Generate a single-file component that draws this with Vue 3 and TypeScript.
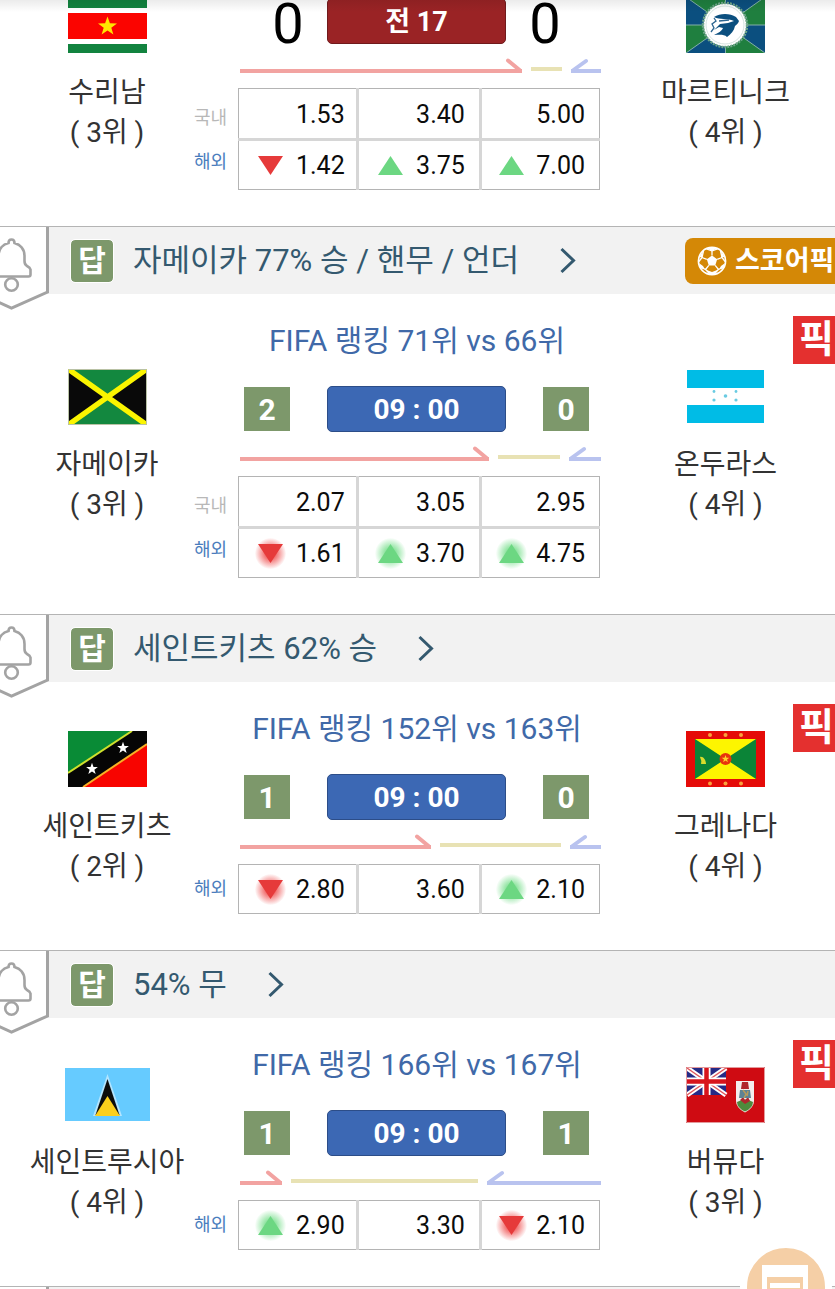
<script setup lang="ts">
type Trend = 'up' | 'down' | ''
interface Odd { value: string; trend: Trend }
interface OddsRow { label: string; foreign: boolean; odds: Odd[] }
interface Team { flag: string; name: string; rank: string; score: string }
interface Match {
  id: number
  pick: string
  scorePick: boolean
  fifa: string
  live: boolean
  time: string
  home: Team
  away: Team
  flow: [number, number, number]
  glow: boolean
  rows: OddsRow[]
}

const odd = (value: string, trend: Trend = ''): Odd => ({ value, trend })

const matches: Match[] = [
  {
    id: 1, pick: '', scorePick: false, fifa: '', live: true, time: '전 17',
    home: { flag: 'suriname', name: '수리남', rank: '( 3위 )', score: '0' },
    away: { flag: 'martinique', name: '마르티니크', rank: '( 4위 )', score: '0' },
    flow: [283, 31, 30], glow: false,
    rows: [
      { label: '국내', foreign: false, odds: [odd('1.53'), odd('3.40'), odd('5.00')] },
      { label: '해외', foreign: true, odds: [odd('1.42', 'down'), odd('3.75', 'up'), odd('7.00', 'up')] },
    ],
  },
  {
    id: 2, pick: '자메이카 77% 승 / 핸무 / 언더', scorePick: true, fifa: 'FIFA 랭킹 71위 vs 66위', live: false, time: '09 : 00',
    home: { flag: 'jamaica', name: '자메이카', rank: '( 3위 )', score: '2' },
    away: { flag: 'honduras', name: '온두라스', rank: '( 4위 )', score: '0' },
    flow: [249, 62, 32], glow: true,
    rows: [
      { label: '국내', foreign: false, odds: [odd('2.07'), odd('3.05'), odd('2.95')] },
      { label: '해외', foreign: true, odds: [odd('1.61', 'down'), odd('3.70', 'up'), odd('4.75', 'up')] },
    ],
  },
  {
    id: 3, pick: '세인트키츠 62% 승', scorePick: false, fifa: 'FIFA 랭킹 152위 vs 163위', live: false, time: '09 : 00',
    home: { flag: 'kitts', name: '세인트키츠', rank: '( 2위 )', score: '1' },
    away: { flag: 'grenada', name: '그레나다', rank: '( 4위 )', score: '0' },
    flow: [191, 121, 31], glow: true,
    rows: [{ label: '해외', foreign: true, odds: [odd('2.80', 'down'), odd('3.60'), odd('2.10', 'up')] }],
  },
  {
    id: 4, pick: '54% 무', scorePick: false, fifa: 'FIFA 랭킹 166위 vs 167위', live: false, time: '09 : 00',
    home: { flag: 'lucia', name: '세인트루시아', rank: '( 4위 )', score: '1' },
    away: { flag: 'bermuda', name: '버뮤다', rank: '( 3위 )', score: '1' },
    flow: [42, 187, 114], glow: true,
    rows: [{ label: '해외', foreign: true, odds: [odd('2.90', 'up'), odd('3.30'), odd('2.10', 'down')] }],
  },
]

const star = 'M0-10 2.4-3.2 9.5-3.1 3.8 1.2 5.9 8.1 0 4 -5.9 8.1 -3.8 1.2 -9.5-3.1 -2.4-3.2Z'
const sides = ['home', 'away'] as const
</script>

<template>
  <main class="page">
    <div class="list">
      <article v-for="m in matches" :key="m.id" class="match" :class="{ live: m.live }">
        <header v-if="m.pick" class="head">
          <button class="bell" type="button" aria-label="알림">
            <svg width="50" height="84" viewBox="0 0 50 84">
              <path d="M-25 0H47.5V65L11.5 81 -25 65Z" fill="#fff" />
              <path d="M47.5 0V65L11.5 81 -25 65" fill="none" stroke="#a3a3a3" stroke-width="3" />
              <path d="M-8 49.500H28.500Q30.500 49.500 30.500 47.500V42.500Q30 40.500 27 39Q24.500 37.500 24.500 34V29C24.500 22 20 17.500 14.500 16C14.500 13.500 13.500 12.500 11.500 12.500S8.500 13.500 8.500 16C3 17.500 -1.500 22 -1.500 29V36" fill="none" stroke="#a3a3a3" stroke-width="2.6" />
              <circle cx="11.500" cy="57.500" r="6.300" fill="none" stroke="#a3a3a3" stroke-width="2.600" />
            </svg>
          </button>
          <span class="answer">답</span>
          <a class="pick" href="#">
            <span>{{ m.pick }}</span>
            <svg width="18" height="28" viewBox="0 0 18 28"><path d="M2.500 2 14.500 13.500 2.500 25" fill="none" stroke="#34596f" stroke-width="3" /></svg>
          </a>
          <button v-if="m.scorePick" class="score-pick" type="button">
            <svg width="30" height="30" viewBox="0 0 30 30">
              <circle cx="15" cy="15" r="13.600" fill="none" stroke="#fff" stroke-width="1.600" />
              <path d="M15 9.500 20.200 13.300 18.200 19.400H11.800L9.800 13.300Z" fill="#fff" />
              <path d="M15 9.500V5M20.200 13.300 25 11.500M18.200 19.400 21.500 23.500M11.800 19.400 8.500 23.500M9.800 13.300 5 11.500M15 5 9.500 2.800M15 5 20.500 2.800M25 11.500 23.500 5M25 11.500 28.500 16M21.500 23.500 27 21M21.500 23.500 17 28M8.500 23.500 13 28M8.500 23.500 3 21M5 11.500 1.500 16M5 11.500 6.500 5" fill="none" stroke="#fff" stroke-width="1.300" />
              <path d="M10.500 2.300Q15 .8 19.500 2.300L15 5.500ZM24 5 28 11.500 25 11ZM28.200 17 26.500 22 22 23.500 24 20ZM12 28.300 8.500 23.500 11 24.500 15 26 19 24.500 21.500 23.500 18 28.300ZM1.800 17 3.500 22 8 23.500 6 20ZM6 5 2 11.500 5 11Z" fill="#fff" />
            </svg>
            <span>스코어픽</span>
          </button>
        </header>

        <div class="body">
          <span v-if="!m.live" class="pick-badge">픽</span>

          <section v-for="side in sides" :key="side" class="team" :class="side">
            <svg v-if="m[side].flag === 'suriname'" class="flag" viewBox="0 0 79 56">
              <path fill="#12833f" d="M0 0H79V56H0Z" />
              <path fill="#fff" d="M0 11H79V47H0Z" />
              <path fill="#fb0400" d="M0 16H79V42H0Z" />
              <path :d="star" fill="#ffe600" transform="translate(39.500 29.500)" />
            </svg>
            <svg v-else-if="m[side].flag === 'martinique'" class="flag" viewBox="0 0 79 56">
              <path fill="#0b4f7f" d="M0 0H79V56H0Z" />
              <path fill="#1f7f3f" d="M0 0H39.500V28ZM0 28H39.500L0 56ZM39.500 28 79 56H39.500ZM39.500 28 79 0V28Z" />
              <path d="M0 0 79 56M79 0 0 56M39.500 0V56M0 28H79" stroke="#83b0a8" stroke-width="1" />
              <circle cx="39" cy="28" r="21.500" fill="#fff" />
              <circle cx="39" cy="28" r="22" fill="none" stroke="#6fa58a" stroke-width="2.500" stroke-dasharray="2 1" />
              <circle cx="39" cy="28" r="19" fill="none" stroke="#d5e3df" stroke-width="1" />
              <path d="M28 20C34 16 44 16 50 20L53 24C52 27 50 28 49 29 48 34 45 37 41 40 38 37 33 38 28 38 32 36 36 34 37 31L33 30 28 33 34 27 42 26 48 24C41 21 34 23 28 20Z" fill="#0b4f7f" />
              <path d="M28 21 30 24 26 27 28 31 25 35M33 24 43 23" fill="none" stroke="#2c6590" stroke-width="1.300" />
            </svg>
            <svg v-else-if="m[side].flag === 'jamaica'" class="flag" viewBox="0 0 79 56">
              <path fill="#090909" d="M0 0H79V56H0Z" />
              <path fill="#13883f" d="M0 0H79L39.500 28ZM0 56H79L39.500 28Z" />
              <path d="M0 0 79 56M79 0 0 56" stroke="#fbf500" stroke-width="5.500" />
              <path d="M.5.5H78.500V55.500H.5Z" fill="none" stroke="#b9c2a5" />
            </svg>
            <svg v-else-if="m[side].flag === 'honduras'" class="flag" viewBox="0 0 79 56">
              <path fill="#fff" d="M0 0H79V56H0Z" />
              <path fill="#00bce6" d="M1 1H78V19H1ZM1 36H78V54H1Z" />
              <g fill="#69cbe2">
                <circle cx="28" cy="22.500" r="1.400" /><circle cx="28" cy="31" r="1.600" />
                <circle cx="39.500" cy="27" r="1.800" />
                <circle cx="50" cy="22.500" r="1.400" /><circle cx="50" cy="31" r="1.600" />
              </g>
            </svg>
            <svg v-else-if="m[side].flag === 'kitts'" class="flag" viewBox="0 0 79 56">
              <path fill="#098b36" d="M0 0H79V56H0Z" />
              <path fill="#f80400" d="M79 13V56H15Z" />
              <path fill="#050505" d="M0 42 64 0H79V13L15 56H0Z" />
              <path d="M0 42 64 0" stroke="#cfe02c" stroke-width="2" />
              <path d="M15 56 79 13" stroke="#f7b024" stroke-width="2" />
              <path :d="star" fill="#fff" transform="translate(24 38) scale(.62)" />
              <path :d="star" fill="#fff" transform="translate(55 17) scale(.62)" />
            </svg>
            <svg v-else-if="m[side].flag === 'grenada'" class="flag" viewBox="0 0 79 56">
              <path fill="#e50b08" d="M0 0H79V56H0Z" />
              <path fill="#fdf500" d="M9 8H70V48H9Z" />
              <path fill="#0b8437" d="M9 8 39.500 28 9 48ZM70 8 39.500 28 70 48Z" />
              <circle cx="39.500" cy="28" r="6" fill="#e8340c" />
              <path :d="star" fill="#ffd42a" transform="translate(39.500 28) scale(.4)" />
              <path d="M14 26C17 25 20 29 20 33L15 33Q16 30 14 26Z" fill="#d9dc2c" />
              <g fill="#f9a23c">
                <circle cx="24" cy="4" r="2" /><circle cx="39.500" cy="4" r="2" /><circle cx="55" cy="4" r="2" />
                <circle cx="24" cy="52.500" r="2" /><circle cx="39.500" cy="52.500" r="2" /><circle cx="55" cy="52.500" r="2" />
              </g>
            </svg>
            <svg v-else-if="m[side].flag === 'lucia'" class="flag wide" viewBox="0 0 85 56">
              <path fill="#66cbff" d="M0 1H85V54H0Z" />
              <path fill="#fff" d="M42.500 7 57 49H28Z" opacity=".5" />
              <path fill="#0c0c0c" d="M42.500 12 54.500 48H30.500Z" />
              <path fill="#fbcf1b" d="M42.500 29 55 49H30Z" />
            </svg>
            <svg v-else class="flag" viewBox="0 0 79 56">
              <path fill="#cf0b12" d="M0 0H79V56H0Z" />
              <path fill="#262a86" d="M1 1H40V28H1Z" />
              <path d="M1 1 40 28M40 1 1 28" stroke="#fff" stroke-width="5" />
              <path d="M1 1 40 28M40 1 1 28" stroke="#e0575c" stroke-width="1.500" />
              <path d="M20.500 1V28M1 14.500H40" stroke="#fff" stroke-width="8" />
              <path d="M20.500 1V28M1 14.500H40" stroke="#d8141c" stroke-width="4.500" />
              <path d="M50 14H68V34Q68 41 59 45.500 50 41 50 34Z" fill="#f3eeee" />
              <path d="M51 35Q59 30 67 35 67 41 59 44.500 51 41 51 35Z" fill="#4f8a3c" />
              <path d="M56 15H62L63 22H55ZM54 33 57 30 59 33 62 30 64 34 59 37Z" fill="#b0252c" />
              <path d="M54 23H64L65 31H53Z" fill="#5e8394" />
              <path d="M57 23 60 27 58 31M62 24 61 29" fill="none" stroke="#b79a5a" stroke-width="1.500" />
              <path d="M.5.5H78.500V55.500H.5Z" fill="none" stroke="#e39a9c" />
            </svg>
            <span class="name">{{ m[side].name }}</span>
            <span class="name">{{ m[side].rank }}</span>
          </section>

          <section class="center">
            <p v-if="m.fifa" class="fifa">{{ m.fifa }}</p>
            <div class="scores">
              <span class="score">{{ m.home.score }}</span>
              <span class="time">{{ m.time }}</span>
              <span class="score">{{ m.away.score }}</span>
            </div>
            <div class="flow">
              <div class="bar win" :style="{ flexGrow: m.flow[0] }">
                <svg width="18" height="16" viewBox="0 0 18 16"><path d="M4 3.500 15.500 13" fill="none" stroke="#f2a3a1" stroke-width="4" stroke-linecap="round" /></svg>
              </div>
              <div class="bar draw" :style="{ flexGrow: m.flow[1] }"></div>
              <div class="bar lose" :style="{ flexGrow: m.flow[2] }">
                <svg width="18" height="16" viewBox="0 0 18 16"><path d="M2.500 13 15 4" fill="none" stroke="#b9c3ef" stroke-width="4" stroke-linecap="round" /></svg>
              </div>
            </div>
            <table class="odds" :class="{ double: m.rows.length > 1 }">
              <colgroup><col class="c-label" /><col class="c-side" /><col class="c-mid" /><col class="c-side" /></colgroup>
              <tbody>
                <tr v-for="row in m.rows" :key="row.label">
                  <th scope="row" :class="{ foreign: row.foreign }">{{ row.label }}</th>
                  <td v-for="(o, i) in row.odds" :key="i">
                    <div class="cell">
                      <span v-if="o.trend" class="trend" :class="[o.trend, { glow: m.glow }]">
                        <svg width="25" height="19" viewBox="0 0 25 19">
                          <path v-if="o.trend === 'up'" d="M12.500 0 25 19H0Z" fill="#6cd782" />
                          <path v-else d="M0 0H25L12.500 19Z" fill="#e63a3a" />
                        </svg>
                      </span>
                      <span class="value">{{ o.value }}</span>
                    </div>
                  </td>
                </tr>
              </tbody>
            </table>
          </section>
        </div>
      </article>
      <article class="match">
        <header class="head"><span class="edge"></span></header>
      </article>
    </div>
    <div class="top-shade"></div>
    <button class="fab" type="button" aria-label="목록">
      <svg width="78" height="78" viewBox="0 0 78 78">
        <path d="M15 17H61V62H15Z" fill="#fff" />
        <path d="M20 29H56V57H20Z" fill="#f5cfa6" />
        <path d="M23 35H53V40H23Z" fill="#fff" />
      </svg>
    </button>
  </main>
</template>

<style>
body {
  margin: 0;
  background: #fff;
}
</style>

<style scoped>
.page {
  position: relative;
  height: 100vh;
  overflow: hidden;
  background: #fff;
  color: #333;
  font-family: Roboto, "Noto Sans CJK KR", sans-serif;
}
.list {
  margin-top: -62px;
}
.top-shade {
  position: absolute;
  inset: 0 0 auto;
  height: 12px;
  background: linear-gradient(rgba(0, 0, 0, 0.08), rgba(0, 0, 0, 0));
}
button {
  border: 0;
  padding: 0;
  font: inherit;
  cursor: pointer;
}
.head {
  position: relative;
  z-index: 1;
  display: flex;
  align-items: center;
  height: 67px;
  padding-left: 71px;
  border-top: 1px solid #b4b4b4;
  background: #f2f2f2;
}
.bell {
  position: absolute;
  top: 0;
  left: 0;
  height: 84px;
  background: none;
}
.bell svg {
  display: block;
}
.edge {
  position: absolute;
  inset: 0 auto 0 0;
  width: 46px;
  border-right: 3px solid #a3a3a3;
  background: #fff;
}
.answer {
  width: 42px;
  height: 42px;
  border-radius: 4px;
  outline: 1px solid #fff;
  background: #7d986b;
  color: #fff;
  font-size: 30px;
  font-weight: 700;
  line-height: 42px;
  text-align: center;
}
.pick {
  display: flex;
  align-items: center;
  gap: 40px;
  margin-left: 20px;
  color: #34596f;
  font-size: 31px;
  line-height: 42px;
  text-decoration: none;
  white-space: nowrap;
}
.score-pick {
  display: flex;
  flex: none;
  align-items: center;
  gap: 8px;
  width: 150px;
  height: 46px;
  margin-left: auto;
  padding-left: 12px;
  box-sizing: border-box;
  border-radius: 8px 0 0 8px;
  background: #d48806;
  color: #fff;
  font-size: 27px;
  font-weight: 700;
  line-height: 42px;
  white-space: nowrap;
}
.score-pick svg {
  flex: none;
}
.body {
  position: relative;
  display: grid;
  grid-template-columns: minmax(0, 194fr) 406px minmax(0, 235fr);
}
.pick-badge {
  position: absolute;
  top: 22px;
  right: 0;
  width: 36px;
  height: 48px;
  padding-left: 6px;
  background: #e4302f;
  color: #fff;
  font-size: 38px;
  font-weight: 700;
  line-height: 47px;
}
.team {
  display: flex;
  flex-direction: column;
  grid-row: 1;
  align-items: center;
  justify-content: center;
  padding-bottom: 14px;
}
.home {
  grid-column: 1;
  padding-left: 20px;
}
.away {
  grid-column: 3;
  padding-left: 16px;
}
.flag {
  width: 79px;
  height: 56px;
  margin-bottom: 20px;
}
.flag.wide {
  width: 85px;
}
.name {
  color: #333;
  font-size: 28px;
  line-height: 40px;
  white-space: nowrap;
}
.center {
  grid-row: 1;
  grid-column: 2;
  padding: 27px 0 36px;
}
.live .center {
  padding-top: 60px;
}
.fifa {
  margin: 0 0 25px 40px;
  color: #4069a8;
  font-size: 30px;
  line-height: 40px;
  text-align: center;
  white-space: nowrap;
}
.scores {
  display: flex;
  align-items: center;
  gap: 37px;
  margin-left: 44px;
  padding: 0 11px 0 6px;
}
.score {
  width: 46px;
  height: 44px;
  background: #7d986b;
  color: #fff;
  font-size: 30px;
  font-weight: 700;
  line-height: 46px;
  text-align: center;
}
.live .scores {
  gap: 16px;
  padding: 0 32px 0 27px;
}
.live .score {
  background: none;
  color: #000;
  font-size: 56px;
  font-weight: 400;
  line-height: 50px;
}
.time {
  flex: 1;
  height: 44px;
  border: 1px solid #2c4d88;
  border-radius: 5px;
  background: #3c68b4;
  color: #fff;
  font-size: 28px;
  font-weight: 700;
  line-height: 46px;
  text-align: center;
  white-space: nowrap;
}
.live .time {
  border-color: #701a1c;
  background: #9a2325;
  font-size: 27px;
}
.flow {
  display: flex;
  gap: 9px;
  height: 16px;
  margin: 13px -1px 15px 46px;
}
.bar {
  display: flex;
  flex: 1 1 0;
  box-sizing: border-box;
  height: 16px;
}
.bar svg {
  flex: none;
}
.win {
  justify-content: flex-end;
  border-bottom: 4px solid #f2a3a1;
}
.draw {
  height: 14px;
  border-bottom: 4px solid #e8e2b4;
}
.lose {
  border-bottom: 4px solid #b9c3ef;
}
.odds {
  width: 100%;
  table-layout: fixed;
  border-collapse: collapse;
}
.c-label {
  width: 44px;
}
.c-side {
  width: 119px;
}
.c-mid {
  width: 123px;
}
th {
  padding: 0;
  color: #b8b8b8;
  font-size: 18px;
  font-weight: 400;
  line-height: 24px;
  text-align: left;
}
th.foreign {
  color: #4b7dbd;
}
.double th {
  padding-top: 8px;
}
.double th.foreign {
  padding: 0 0 6px;
}
td {
  padding: 0;
  border: 1px solid #b4b4b4;
}
td + td {
  border-left: 3px solid #d6d6d6;
}
tr + tr td {
  border-top: 3px solid #d6d6d6;
}
.cell {
  display: flex;
  align-items: center;
  height: 48px;
  padding: 0 11px 0 19px;
}
.double tr:first-child .cell {
  height: 49px;
}
td + td .cell {
  padding-right: 14px;
}
td:last-child .cell {
  padding-left: 17px;
}
.trend {
  position: relative;
  display: flex;
}
.trend svg {
  position: relative;
}
.glow::before {
  position: absolute;
  inset: -6px -3px;
  border-radius: 50%;
  content: "";
}
.glow.up::before {
  background: radial-gradient(circle, #8fe4a0 25%, rgba(170, 240, 185, 0) 72%);
}
.glow.down::before {
  background: radial-gradient(circle, #f27070 25%, rgba(255, 160, 160, 0) 72%);
}
.value {
  margin-left: auto;
  padding-top: 2px;
  color: #0c0c0c;
  font-size: 25px;
  line-height: 32px;
}
.fab {
  position: absolute;
  right: 3px;
  bottom: -44px;
  z-index: 2;
  width: 92px;
  height: 92px;
  border: 7px solid #fff;
  border-radius: 50%;
  background: #f5cfa6;
}
.fab svg {
  display: block;
}
</style>
